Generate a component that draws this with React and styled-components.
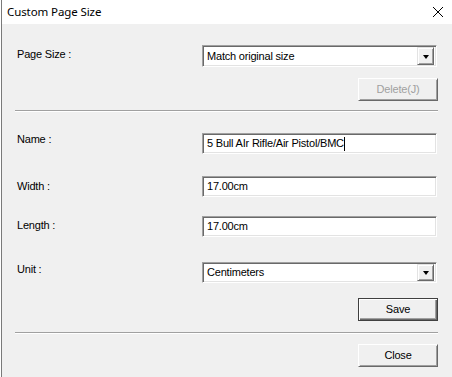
import React from "react";
import styled, { createGlobalStyle } from "styled-components";

const Global = createGlobalStyle`
  html, body { margin: 0; padding: 0; background: #ffffff; }
  body { width: 452px; height: 377px; overflow: hidden; }
`;

const Window = styled.div`
  width: 451px;
  height: 377px;
  margin-left: 1px;
  border-left: 1px solid #7a7a7a;
  box-sizing: border-box;
  display: flex;
  flex-direction: column;
  font-family: "Liberation Sans", Arial, sans-serif;
  font-size: 11px;
  letter-spacing: -0.2px;
  color: #000;
`;

const TitleBar = styled.div`
  height: 24px;
  flex: 0 0 24px;
  background: #ffffff;
  display: flex;
  align-items: center;
  justify-content: space-between;
  padding: 0 8px 0 5px;
`;

const Title = styled.span`
  font-family: "Noto Sans", "Segoe UI", sans-serif;
  font-size: 11.5px;
  letter-spacing: -0.1px;
  color: #000;
  line-height: 16px;
`;

const CloseIcon = styled.svg`
  width: 12px;
  height: 12px;
  display: block;
`;

const Body = styled.div`
  flex: 1;
  background: #f0f0f0;
  padding: 21px 14px 0 14px;
  display: flex;
  flex-direction: column;
`;

const Row = styled.div`
  display: grid;
  grid-template-columns: 186px 235px;
  margin-top: ${(p) => p.$mt || 0}px;
`;

const Label = styled.div`
  line-height: 13px;
  padding-left: 1px;
  margin-top: ${(p) => p.$offset || 0}px;
`;

const sunken = `
  box-sizing: border-box;
  border-style: solid;
  border-width: 1px;
  border-color: #a0a0a0 #ffffff #ffffff #a0a0a0;
  box-shadow: inset 1px 1px 0 #696969, inset -1px -1px 0 #e3e3e3;
  background: #ffffff;
`;

const TextBox = styled.div`
  ${sunken}
  height: 21px;
  padding: 3px 4px 0 4px;
  line-height: 13px;
  white-space: nowrap;
  overflow: hidden;
`;

const Caret = styled.span`
  display: inline-block;
  width: 1px;
  height: 14px;
  background: #000;
  vertical-align: top;
`;

const Combo = styled.div`
  ${sunken}
  height: ${(p) => p.$h || 22}px;
  display: flex;
  align-items: center;
  justify-content: space-between;
  padding: 0 2px 0 4px;
  line-height: 13px;
`;

const DropButton = styled.div`
  width: 17px;
  height: ${(p) => p.$h || 18}px;
  box-sizing: border-box;
  background: #f0f0f0;
  border-style: solid;
  border-width: 1px;
  border-color: #e3e3e3 #696969 #696969 #e3e3e3;
  box-shadow: inset 1px 1px 0 #ffffff, inset -1px -1px 0 #a0a0a0;
  display: flex;
  align-items: center;
  justify-content: center;
`;

const Arrow = styled.span`
  width: 0;
  height: 0;
  border-left: 3.5px solid transparent;
  border-right: 3.5px solid transparent;
  border-top: 4px solid #000;
  margin-top: 1px;
`;

const ButtonRow = styled.div`
  display: flex;
  justify-content: flex-end;
  margin-top: ${(p) => p.$mt || 0}px;
`;

const Button = styled.button`
  width: 80px;
  height: ${(p) => p.$h || 23}px;
  box-sizing: border-box;
  background: #f0f0f0;
  font-family: "Liberation Sans", Arial, sans-serif;
  font-size: 11px;
  letter-spacing: -0.2px;
  color: ${(p) => (p.disabled ? "#a0a0a0" : "#000")};
  border-style: solid;
  border-width: 1px;
  border-color: ${(p) =>
    p.$default ? "#404040" : "#ffffff #696969 #696969 #ffffff"};
  box-shadow: ${(p) =>
    p.$default
      ? "inset 1px 1px 0 #ffffff, inset -1px -1px 0 #696969, inset -2px -2px 0 #a0a0a0"
      : "inset 1px 1px 0 #f0f0f0, inset -1px -1px 0 #a0a0a0"};
  padding: 0 0 1px 0;
  margin: 0;
  line-height: 13px;
`;

const Separator = styled.div`
  height: 1px;
  border-top: 1px solid #a0a0a0;
  background: #ffffff;
  margin-top: ${(p) => p.$mt || 0}px;
  margin-left: -1px;
`;

export default function App() {
  return (
    <>
      <Global />
      <Window>
        <TitleBar>
          <Title>Custom Page Size</Title>
          <CloseIcon viewBox="0 0 12 12">
            <path d="M1 1 L11 11 M11 1 L1 11" stroke="#000" strokeWidth="1" fill="none" />
          </CloseIcon>
        </TitleBar>
        <Body>
          <Row>
            <Label $offset={3}>Page Size :</Label>
            <Combo $h={22}>
              <span>Match original size</span>
              <DropButton $h={18}>
                <Arrow />
              </DropButton>
            </Combo>
          </Row>
          <ButtonRow $mt={11}>
            <Button disabled>Delete(J)</Button>
          </ButtonRow>
          <Separator $mt={9} />

          <Row $mt={21}>
            <Label $offset={0}>Name :</Label>
            <TextBox>
              5 Bull AIr Rifle/Air Pistol/BMC
              <Caret />
            </TextBox>
          </Row>
          <Row $mt={22}>
            <Label $offset={4}>Width :</Label>
            <TextBox>17.00cm</TextBox>
          </Row>
          <Row $mt={19}>
            <Label $offset={3}>Length :</Label>
            <TextBox>17.00cm</TextBox>
          </Row>
          <Row $mt={25}>
            <Label $offset={1}>Unit :</Label>
            <Combo $h={21}>
              <span>Centimeters</span>
              <DropButton $h={17}>
                <Arrow />
              </DropButton>
            </Combo>
          </Row>
          <ButtonRow $mt={15}>
            <Button $default>Save</Button>
          </ButtonRow>
          <Separator $mt={11} />
          <ButtonRow $mt={10}>
            <Button>Close</Button>
          </ButtonRow>
        </Body>
      </Window>
    </>
  );
}
